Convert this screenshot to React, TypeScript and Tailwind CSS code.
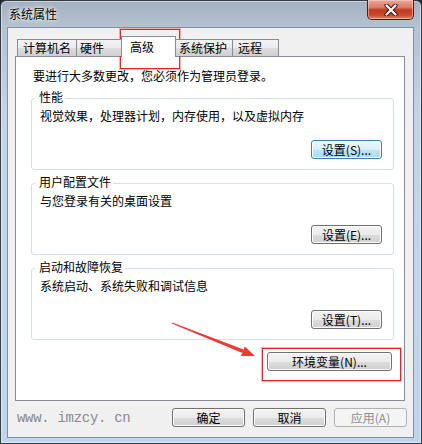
import React from "react";

type Variant = "normal" | "focus" | "disabled";

function Btn({ label, className, variant = "normal" }: { label: string; className: string; variant?: Variant }) {
  const v =
    variant === "focus"
      ? "border-[#3c7fb1] bg-[linear-gradient(#eaf6fd_0%,#d9f0fc_50%,#bee6fd_51%,#a7d9f5_100%)] shadow-[inset_0_0_0_1px_#ffffff] text-black"
      : variant === "disabled"
      ? "border-[#adb2b5] bg-[#f4f4f4] text-[#8d8d8d]"
      : "border-[#707070] bg-[linear-gradient(#f2f2f2_0%,#ebebeb_50%,#dddddd_51%,#cfcfcf_100%)] shadow-[inset_0_0_0_1px_#fcfcfc] text-black";
  return (
    <div className={`h-[19px] shrink-0 rounded-[3px] border flex items-center justify-center text-[12px] leading-[14px] ${v} ${className}`}>
      {label}
    </div>
  );
}

function Group({
  title,
  desc,
  btn,
  variant = "normal",
  className,
}: {
  title: string;
  desc: string;
  btn: string;
  variant?: Variant;
  className: string;
}) {
  return (
    <div className={`relative h-[72px] ml-[15px] mr-[10px] rounded-[3px] border border-[#d5dfe5] flex flex-col ${className}`}>
      <div className="absolute left-[3px] top-[-9px] bg-white pl-[4px] pr-[2px] text-[12px] leading-[14px] text-black">{title}</div>
      <div className="mt-[10px] ml-[8px] text-[12px] leading-[14px] text-black">{desc}</div>
      <div className="mt-[17px] flex justify-end mr-[11px]">
        <Btn label={btn} className="w-[71px]" variant={variant} />
      </div>
    </div>
  );
}

export default function App() {
  return (
    <div className="relative w-[422px] h-[444px] overflow-hidden bg-[#1f2a36] [font-family:'Noto_Sans_CJK_SC','Noto_Sans',sans-serif]">
      <div className="flex flex-col w-[422px] h-[444px] rounded-t-[6px] border border-[#343c46] bg-[linear-gradient(180deg,#a2b0bf_0%,#b4c2d1_6%,#c3d3e5_25%,#c0d5ec_100%)] pl-[6px] pr-[7px] pb-[5px] shadow-[inset_0_0_0_1px_rgba(255,255,255,0.45)]">
        {/* title bar */}
        <div className="flex h-[26px] shrink-0">
          <div className="ml-[2px] mt-[6px] text-[12px] leading-[14px] text-black [text-shadow:0_0_6px_#ffffff,0_0_3px_#ffffff]">
            系统属性
          </div>
          <div className="ml-auto -mt-px w-[47px] h-[20px] flex items-center justify-center rounded-b-[5px] border border-t-0 border-[#4d1c15] bg-[linear-gradient(180deg,#e6aa9c_0%,#d77a64_40%,#c2391f_52%,#c84a30_80%,#e0876a_100%)] shadow-[inset_0_0_0_1px_rgba(255,220,210,0.5)]">
            <svg width="14" height="12" viewBox="0 0 14 12">
              <path d="M2.5 1.5 L11.5 10.5 M11.5 1.5 L2.5 10.5" stroke="#3b1410" strokeWidth="4.2" strokeLinecap="round" />
              <path d="M2.5 1.5 L11.5 10.5 M11.5 1.5 L2.5 10.5" stroke="#ffffff" strokeWidth="2.2" strokeLinecap="round" />
            </svg>
          </div>
        </div>

        {/* client area */}
        <div className="flex-1 flex flex-col border border-[#7f8fa1] bg-[#f0f0f0] pt-[8px] pl-[7px] pr-[8px]">
          {/* tabs */}
          <div className="relative z-10 flex items-end h-[20px] shrink-0 pl-[2px] text-[12px] leading-[14px] text-black">
            <div className="w-[60px] h-[17px] border border-b-0 border-[#898c95] pl-[5px] pt-[1px] bg-[linear-gradient(#f3f3f3_0%,#ebebeb_50%,#dddddd_51%,#cfcfcf_100%)]">
              计算机名
            </div>
            <div className="-ml-px w-[46px] h-[17px] border border-b-0 border-[#898c95] pl-[3px] pt-[1px] bg-[linear-gradient(#f3f3f3_0%,#ebebeb_50%,#dddddd_51%,#cfcfcf_100%)]">
              硬件
            </div>
            <div className="relative z-10 -ml-px -mb-px w-[55px] h-[21px] border border-b-0 border-[#898c95] pl-[8px] pt-[3px] bg-white">
              高级
            </div>
            <div className="-ml-px w-[58px] h-[17px] border border-b-0 border-[#898c95] pl-[3px] pt-[1px] bg-[linear-gradient(#f3f3f3_0%,#ebebeb_50%,#dddddd_51%,#cfcfcf_100%)]">
              系统保护
            </div>
            <div className="-ml-px w-[47px] h-[17px] border border-b-0 border-[#898c95] pl-[5px] pt-[1px] bg-[linear-gradient(#f3f3f3_0%,#ebebeb_50%,#dddddd_51%,#cfcfcf_100%)]">
              远程
            </div>
          </div>

          {/* panel */}
          <div className="h-[345px] shrink-0 border border-[#898c95] bg-white flex flex-col">
            <div className="mt-[12px] ml-[17px] text-[12px] leading-[14px] text-black">
              要进行大多数更改，您必须作为管理员登录。
            </div>
            <Group className="mt-[15px]" title="性能" desc="视觉效果，处理器计划，内存使用，以及虚拟内存" btn="设置(S)..." variant="focus" />
            <Group className="mt-[13px]" title="用户配置文件" desc="与您登录有关的桌面设置" btn="设置(E)..." />
            <Group className="mt-[13px]" title="启动和故障恢复" desc="系统启动、系统失败和调试信息" btn="设置(T)..." />
            <div className="mt-[12px] mr-[12px] flex justify-end">
              <Btn label="环境变量(N)..." className="w-[125px]" />
            </div>
          </div>

          {/* footer */}
          <div className="mt-[7px] h-[19px] flex items-center">
            <div className="pl-[2px] text-[14px] leading-[16px] tracking-[-0.3px] text-[#8a8a8a] [font-family:'Liberation_Mono',monospace]">
              www. imzcy. cn
            </div>
            <div className="ml-auto -mr-[2px] flex gap-[8px]">
              <Btn label="确定" className="w-[73px]" />
              <Btn label="取消" className="w-[73px]" />
              <Btn label="应用(A)" className="w-[73px]" variant="disabled" />
            </div>
          </div>
        </div>
      </div>

      {/* annotations */}
      <div className="absolute left-[120px] top-[29px] w-[60px] h-[40px] border border-[#e8262a] shadow-[0_0_0_1px_rgba(240,60,60,0.4)] pointer-events-none" />
      <div className="absolute left-[262px] top-[348px] w-[139px] h-[33px] border border-[#e8262a] shadow-[0_0_0_1px_rgba(240,60,60,0.4)] pointer-events-none" />
      <svg className="absolute left-0 top-0 pointer-events-none" width="422" height="444" viewBox="0 0 422 444">
        <polygon points="171.8,323.5 172.2,322.5 243.6,349.6 242.3,353.0" fill="#ee3a34" />
        <polygon points="255,356 241.0,356.0 244.8,346.4" fill="#ee3a34" />
      </svg>
    </div>
  );
}
